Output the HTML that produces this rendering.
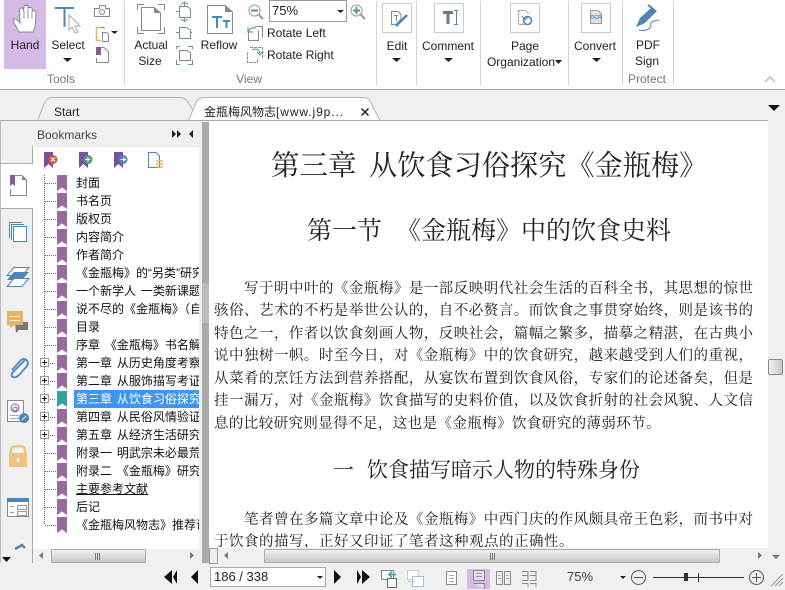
<!DOCTYPE html>
<html lang="zh-CN"><head><meta charset="utf-8"><title>PDF Reader</title>
<style>
html,body{margin:0;padding:0}
body{width:785px;height:590px;position:relative;overflow:hidden;background:#f0f0f0;font-family:"Liberation Sans","Noto Sans CJK SC",sans-serif;font-size:12px;color:#222}
.a{position:absolute}
.t{position:absolute;white-space:nowrap;line-height:16px;height:16px;z-index:2}
.c{transform:translateX(-50%)}
.g{color:#777}
.sep{position:absolute;top:1px;height:84px;width:1px;background:#d4d4d4}
.box{position:absolute;top:3px;width:28px;height:28px;border:1px solid #ccc;background:#fdfdfd}
.l{position:absolute;left:214px;width:539px;height:20px;line-height:20px;font-family:"Liberation Serif","Noto Serif CJK SC",serif;font-size:14.5px;color:#1a1a1a;text-align:justify;text-align-last:justify;text-justify:inter-character;white-space:nowrap}
.h{position:absolute;white-space:pre;font-family:"Liberation Serif","Noto Serif CJK SC",serif;color:#222}
.r{position:absolute;left:76px;height:18px;line-height:18px;font-size:12px;color:#111;white-space:nowrap;word-spacing:1.5px;font-family:"Liberation Sans","Noto Sans CJK SC",sans-serif}
.b{position:absolute;left:57px;width:10px;height:16px;background:#9a6a9e;clip-path:polygon(0 0,100% 0,100% 100%,50% 78%,0 100%)}
</style></head><body>

<!-- ribbon -->
<div class="a" style="left:0;top:0;width:785px;height:89px;background:#fdfdfd;border-bottom:1px solid #aaa"></div>
<div class="a" style="left:4px;top:0;width:42px;height:69px;background:#d5b9e6"></div>
<div class="sep" style="left:124px"></div><div class="sep" style="left:376px"></div><div class="sep" style="left:416px"></div><div class="sep" style="left:480px"></div><div class="sep" style="left:568px"></div><div class="sep" style="left:622px"></div><div class="sep" style="left:673px"></div>
<div class="box" style="left:382px"></div><div class="box" style="left:434px"></div><div class="box" style="left:510px"></div><div class="box" style="left:581px"></div>

<div class="t c" style="left:25px;top:37px">Hand</div>
<div class="t c" style="left:68px;top:37px">Select</div>
<div class="t c" style="left:151px;top:37px">Actual</div>
<div class="t c" style="left:150px;top:53px">Size</div>
<div class="t c" style="left:219px;top:37px">Reflow</div>
<div class="t" style="left:267px;top:25px">Rotate Left</div>
<div class="t" style="left:267px;top:47px">Rotate Right</div>
<div class="t c" style="left:397px;top:38px">Edit</div>
<div class="t c" style="left:448px;top:38px">Comment</div>
<div class="t c" style="left:525px;top:38px">Page</div>
<div class="t c" style="left:521px;top:54px">Organization</div>
<div class="t c" style="left:595px;top:38px">Convert</div>
<div class="t c" style="left:648px;top:37px">PDF</div>
<div class="t c" style="left:647px;top:53px">Sign</div>
<div class="t c g" style="left:61px;top:71px">Tools</div>
<div class="t c g" style="left:249px;top:71px">View</div>
<div class="t c g" style="left:647px;top:71px">Protect</div>
<div class="a" style="left:269px;top:0;width:76px;height:20px;border:1px solid #999;background:#fff"></div>
<div class="t" style="left:272px;top:3px;font-size:13px">75%</div>

<!-- tabs -->
<div class="t" style="left:54px;top:104px">Start</div>
<div class="t" style="left:204px;top:104px">金瓶梅风物志<span style="letter-spacing:.9px">[www.j9p...</span></div>

<!-- sidebar -->
<div class="t" style="left:37px;top:127px;color:#444">Bookmarks</div>
<div class="a" style="left:33px;top:146px;width:166px;height:417px;background:#fff"></div>
<div class="a" style="left:0;top:163px;width:34px;height:45px;background:#fff"></div>
<div class="a" style="left:0;top:121px;width:1px;height:442px;background:#bbb"></div>
<div class="a" style="left:32px;top:146px;width:1px;height:17px;background:#aaa"></div>
<div class="a" style="left:0;top:163px;width:33px;height:1px;background:#aaa"></div>
<div class="a" style="left:0;top:208px;width:33px;height:1px;background:#aaa"></div>
<div class="a" style="left:32px;top:208px;width:1px;height:355px;background:#aaa"></div>
<div class="a" style="left:33px;top:146px;width:166px;height:1px;background:#e8e8e8"></div>
<div class="a" style="left:202px;top:122px;width:7px;height:441px;background:#aaa"></div>
<div class="a" style="left:202px;top:283px;width:7px;height:40px;background-image:radial-gradient(#eee 0.6px,transparent 0.7px);background-size:2px 2px"></div>

<div class="a" style="left:74px;top:390px;width:125px;height:18px;background:#3c96f0"></div>
<div class="a" style="left:0;top:0;width:199px;height:548px;overflow:hidden">
<div class="b" style="top:175px"></div><div class="r" style="top:174px">封面</div>
<div class="b" style="top:193px"></div><div class="r" style="top:192px">书名页</div>
<div class="b" style="top:211px"></div><div class="r" style="top:210px">版权页</div>
<div class="b" style="top:229px"></div><div class="r" style="top:228px">内容简介</div>
<div class="b" style="top:247px"></div><div class="r" style="top:246px">作者简介</div>
<div class="b" style="top:265px"></div><div class="r" style="top:264px">《金瓶梅》的“另类”研究</div>
<div class="b" style="top:283px"></div><div class="r" style="top:282px">一个新学人 一类新课题</div>
<div class="b" style="top:301px"></div><div class="r" style="top:300px">说不尽的《金瓶梅》（自序）</div>
<div class="b" style="top:319px"></div><div class="r" style="top:318px">目录</div>
<div class="b" style="top:337px"></div><div class="r" style="top:336px">序章 《金瓶梅》书名解</div>
<div class="b" style="top:355px"></div><div class="r" style="top:354px">第一章 从历史角度考察</div>
<div class="b" style="top:373px"></div><div class="r" style="top:372px">第二章 从服饰描写考证</div>
<div class="b" style="top:391px;background:#36a09a"></div><div class="r" style="top:390px;color:#fff">第三章 从饮食习俗探究</div>
<div class="b" style="top:409px"></div><div class="r" style="top:408px">第四章 从民俗风情验证</div>
<div class="b" style="top:427px"></div><div class="r" style="top:426px">第五章 从经济生活研究</div>
<div class="b" style="top:445px"></div><div class="r" style="top:444px">附录一 明武宗未必最荒</div>
<div class="b" style="top:463px"></div><div class="r" style="top:462px">附录二 《金瓶梅》研究</div>
<div class="b" style="top:481px"></div><div class="r" style="top:480px;text-decoration:underline">主要参考文献</div>
<div class="b" style="top:499px"></div><div class="r" style="top:498px">后记</div>
<div class="b" style="top:517px"></div><div class="r" style="top:516px">《金瓶梅风物志》推荐语</div>
</div>

<!-- document -->
<div class="a" style="left:209px;top:121px;width:559px;height:427px;background:#fff"></div>
<div class="h" style="left:271px;top:149px;font-size:28.5px;line-height:36px">第三章</div>
<div class="h" style="left:369px;top:149px;font-size:28.2px;line-height:36px">从饮食习俗探究《金瓶梅》</div>
<div class="h" style="left:307px;top:216px;font-size:25px;line-height:32px">第一节</div>
<div class="h" style="left:396px;top:216px;font-size:25px;line-height:32px">《金瓶梅》中的饮食史料</div>
<div class="h" style="left:333px;top:456px;font-size:21px;line-height:28px">一</div>
<div class="h" style="left:367px;top:456px;font-size:21px;line-height:28px">饮食描写暗示人物的特殊身份</div>
<div class="l" style="top:279px;left:244px;width:509px">写于明中叶的《金瓶梅》是一部反映明代社会生活的百科全书，其思想的惊世</div>
<div class="l" style="top:301px">骇俗、艺术的不朽是举世公认的，自不必赘言。而饮食之事贯穿始终，则是该书的</div>
<div class="l" style="top:324px">特色之一，作者以饮食刻画人物，反映社会，篇幅之繁多，描摹之精湛，在古典小</div>
<div class="l" style="top:346px">说中独树一帜。时至今日，对《金瓶梅》中的饮食研究，越来越受到人们的重视，</div>
<div class="l" style="top:369px">从菜肴的烹饪方法到营养搭配，从宴饮布置到饮食风俗，专家们的论述备矣，但是</div>
<div class="l" style="top:391px">挂一漏万，对《金瓶梅》饮食描写的史料价值，以及饮食折射的社会风貌、人文信</div>
<div class="l" style="top:414px;text-align:left;text-align-last:left;letter-spacing:.4px;width:auto">息的比较研究则显得不足，这也是《金瓶梅》饮食研究的薄弱环节。</div>
<div class="l" style="top:510px;left:244px;width:509px">笔者曾在多篇文章中论及《金瓶梅》中西门庆的作风颇具帝王色彩，而书中对</div>
<div class="l" style="top:532px;text-align:left;text-align-last:left;letter-spacing:.5px;width:auto">于饮食的描写，正好又印证了笔者这种观点的正确性。</div>

<!-- status -->
<div class="a" style="left:210px;top:567px;width:114px;height:18px;border:1px solid #aaa;background:#fff"></div>
<div class="t" style="left:214px;top:569px;font-size:13px">186 / 338</div>
<div class="a" style="left:467px;top:569px;width:23px;height:20px;background:#d5b9e6"></div>
<div class="t" style="left:567px;top:569px;font-size:13px;color:#444">75%</div>

<!-- vector layer -->
<svg class="a" style="left:0;top:0" width="785" height="590" viewBox="0 0 785 590" fill="none" xmlns="http://www.w3.org/2000/svg">
<defs><linearGradient id="th" x1="0" y1="0" x2="0" y2="1"><stop offset="0" stop-color="#f2f2f2"/><stop offset="1" stop-color="#c6c6c6"/></linearGradient>
<linearGradient id="tv" x1="0" y1="0" x2="1" y2="0"><stop offset="0" stop-color="#f2f2f2"/><stop offset="1" stop-color="#c6c6c6"/></linearGradient></defs>
<!-- tabs -->
<path d="M37.500 120.500 L45 102 Q47 97.500 52 97.500 H180 Q185 97.500 188 102 L193 110" stroke="#b4b4b4" fill="#f0f0f0"/>
<path d="M188.500 120.500 L196 103 Q198 97.500 204 97.500 H364 Q368 97.500 370 101 L380 120.500 Z" stroke="#b4b4b4" fill="#fff"/>
<path d="M0 120.500H768" stroke="#aaa"/>
<path d="M361.500 108.500 L368.500 115.500 M368.500 108.500 L361.500 115.500" stroke="#222" stroke-width="1.500"/>
<path d="M768 105 H780 L774 111 Z" fill="#111"/>
<path d="M765 82 L770 77 L775 82" stroke="#ccc" stroke-width="2"/>
<!-- hand -->
<path d="M19 32 Q17 28 14 23 Q12 19 15 19 Q17 19 20 23 L19.500 10 Q20 7.500 22 8 Q23.500 8.500 23.500 11 L24 6.500 Q25 4.500 27 5.500 Q28 6 28 8 L29 7.500 Q31 6.500 32 8.500 L32.500 11 Q35 10 36 12 L35.500 23 Q35 28 33 32 Z" fill="#fff" stroke="#888"/>
<path d="M24 11V19M28 8V19M32 11V19" stroke="#999"/>
<!-- select -->
<path d="M55 8H74M64.500 8V27" stroke="#4a86b8" stroke-width="2"/>
<path d="M69 15 L80 26 L75 26 L78 32 L75 33 L72 27 L69 30 Z" fill="#fff" stroke="#aaa"/>
<path d="M63 58 H72 L67.500 62 Z" fill="#222"/>
<!-- tools small -->
<path d="M94.500 8.500H99.500V5.500H105.500V8.500H109.500V16.500H94.500Z" stroke="#888" fill="#fff"/><circle cx="102" cy="12" r="2.500" stroke="#888"/>
<path d="M100 27.500H96.500V40.500H101" stroke="#e5b26b" stroke-width="1.500"/><path d="M100 27.500H104V29" stroke="#888"/>
<path d="M102.500 32.500H106.500L108.500 34.500V41.500H102.500Z" stroke="#888" fill="#fff"/>
<path d="M111 31H118L114.500 34Z" fill="#222"/>
<path d="M96.500 52V47.500H104L108.500 52V62.500H96.500V58" stroke="#888" fill="#fff"/><rect x="96" y="47" width="5" height="8" fill="#8a5aa0"/>
<!-- actual size -->
<path d="M137.500 10V4.500H144M158 4.500H164.500V10M137.500 27V33.500H144M158 33.500H164.500V27" stroke="#5b9e8c"/>
<path d="M141.500 7.500H154L160.500 13V30.500H141.500Z" stroke="#888" fill="#fff"/><path d="M154 7V13H161Z" fill="#888"/>
<g stroke="#888" fill="#fff"><path d="M179.500 6.500H187L190.500 9V17.500H179.500Z"/><path d="M179.500 27.500H187L190.500 30V38.500H179.500Z"/><path d="M179.500 50.500H187L190.500 53V60.500H179.500Z"/></g>
<g stroke="#5b9e8c"><path d="M184.500 2V6M181 4.500L184.500 2L188 4.500M184.500 21V17.500M181 19L184.500 21.500L188 19M176 11.500H179M176 32.500H179M192 32.500H190M176.500 49V46.500H180M188 46.500H192.500V49M176.500 60V64.500H180M188 64.500H192.500V60"/></g>
<!-- reflow -->
<path d="M207.500 5.500H225L232.500 12V33.500H207.500Z" stroke="#888" fill="#fff"/><path d="M225 5V12H233Z" fill="#888"/>
<path d="M212 17H222M217 17V28M223 21H230M226.500 21V28" stroke="#4a86b8" stroke-width="2"/>
<!-- zoom -->
<circle cx="254.500" cy="10.500" r="5.500" stroke="#999" fill="#fff"/><path d="M258 14L263 19" stroke="#999" stroke-width="2"/><path d="M251 10.500H258" stroke="#4a9a80" stroke-width="2"/>
<circle cx="356.500" cy="10.500" r="5.500" stroke="#999" fill="#fff"/><path d="M360 14L365 19" stroke="#999" stroke-width="2"/><path d="M353 10.500H360M356.500 7V14" stroke="#4a9a80" stroke-width="2"/>
<path d="M337 10H344L340.500 13Z" fill="#222"/>
<!-- rotate -->
<path d="M248.500 32.500V40.500H258.500V30.500M255 26.500H262.500V38" stroke="#888"/><path d="M248 32Q250 27 256 28M248 27V32H253" stroke="#4a9a80"/>
<path d="M247.500 52.500V62.500H257.500V58M250 47.500H262.500V58" stroke="#888" stroke-dasharray="3 1"/><path d="M252 50Q258 47 260 53M257 52L260 55L263 51" stroke="#4a9a80"/>
<!-- edit -->
<path d="M391.500 11.500H398L401 14.500V19L396 24.500H391.500Z" stroke="#888" fill="#fff"/><path d="M394 15.500H398M396.500 15.500V21" stroke="#888"/>
<path d="M396 26L407 15" stroke="#4a86b8" stroke-width="2.500"/>
<path d="M392 58H401L396.500 62Z" fill="#222"/><path d="M444 58H453L448.500 62Z" fill="#222"/>
<!-- comment -->
<path d="M443 12.500H453M448 12.500V24" stroke="#777" stroke-width="3"/>
<path d="M454 10.500H458M456.500 10.500V24.500M454 24.500H458" stroke="#4a86b8"/>
<!-- page org -->
<path d="M518.500 10.500H526L529.500 14M518.500 10.500V24.500H525" stroke="#888" stroke-dasharray="2 1"/>
<circle cx="527.500" cy="20.500" r="4" stroke="#4a86b8" stroke-width="1.500"/><path d="M522 16L525 20L528 17" stroke="#4a86b8"/>
<path d="M555 60H562L558.500 64Z" fill="#222"/>
<!-- convert -->
<path d="M590.500 10.500H598L601.500 14V23.500H590.500Z" fill="#e0e0e0" stroke="#999"/>
<text x="590.500" y="19" font-family="Liberation Sans" font-size="5" font-weight="bold" fill="#4a86b8">OCR</text>
<path d="M592 58H601L596.500 62Z" fill="#222"/>
<!-- pdf sign -->
<path d="M636 27 L640 18 L652 7 L657 11 L645 23 Z" fill="#4a86b8"/><path d="M648 5L652 8" stroke="#4a86b8" stroke-width="2"/>
<path d="M639 30Q648 32 651 26Q649 21 659 20" stroke="#4a86b8"/>

<!-- bookmark toolbar -->
<g fill="#7b4f9d"><path d="M44 152H53V168L48.500 164L44 168Z"/><path d="M79 152H88V168L83.500 164L79 168Z"/><path d="M114 152H123V168L118.500 164L114 168Z"/></g>
<circle cx="53" cy="159.500" r="4.500" fill="#d9583c"/><path d="M51 157.500L55 161.500M55 157.500L51 161.500" stroke="#fff"/>
<circle cx="88" cy="159.500" r="4.500" fill="#4a9a80"/><path d="M85.500 159.500H90.500M88 157V162" stroke="#fff"/>
<circle cx="123" cy="159.500" r="4.500" fill="#4a80b8"/><path d="M120.500 159.500H125.500M123 157.500L125.500 159.500L123 161.500" stroke="#fff"/>
<path d="M148.500 152.500H156L159.500 156V167.500H148.500Z" stroke="#4a86b8" fill="#fff"/><path d="M156 161H163M156 164H163M156 167H163" stroke="#e5b26b" stroke-width="1.600"/>
<path d="M172 130L176 134L172 138ZM177 130L181 134L177 138Z" fill="#222"/><path d="M193 130V138L189 134Z" fill="#222"/>

<!-- tree -->
<g stroke="#666" stroke-dasharray="1 1">
<path d="M44.500 175V524"/>
<path d="M45 183.500H56M45 201.500H56M45 219.500H56M45 237.500H56M45 255.500H56M45 273.500H56M45 291.500H56M45 309.500H56M45 327.500H56M45 345.500H56M50 363.500H56M50 381.500H56M50 399.500H56M50 417.500H56M50 435.500H56M45 453.500H56M45 471.500H56M45 489.500H56M45 507.500H56M45 525.500H56"/>
</g>
<g stroke="#999" fill="#fff"><rect x="40.500" y="358.500" width="8" height="8"/><rect x="40.500" y="376.500" width="8" height="8"/><rect x="40.500" y="394.500" width="8" height="8"/><rect x="40.500" y="412.500" width="8" height="8"/><rect x="40.500" y="430.500" width="8" height="8"/></g>
<path d="M42 362.500H47M44.500 360V365M42 380.500H47M44.500 378V383M42 398.500H47M44.500 396V401M42 416.500H47M44.500 414V419M42 434.500H47M44.500 432V437" stroke="#111"/>

<!-- left rail -->
<path d="M10.500 186V175.500H22L26.500 180V195.500H10.500V189" stroke="#888" fill="#fff"/><path d="M22 175V180H27Z" fill="#888"/><path d="M10 175H15V186L12.500 184L10 186Z" fill="#8a5aa0"/>
<path d="M9.500 238V222.500H22" stroke="#4a86b8"/><path d="M11.500 240V224.500H24" stroke="#4a86b8"/><rect x="13.500" y="226.500" width="13" height="15" stroke="#4a86b8" fill="#fff"/>
<path d="M14 267.500H29L22 275.500H7Z" stroke="#4a86b8" fill="#fff"/><path d="M14 272H29L22 280H7Z" fill="#4a86b8"/><path d="M14 278.500H29L22 286.500H7Z" stroke="#4a86b8" fill="#fff"/>
<path d="M15 322H28V330H19L16 333Z" fill="#777"/>
<path d="M7 311H23V325H15L10 328V325H7Z" fill="#ecb060"/><path d="M10 316.500H20M10 320.500H20" stroke="#fff"/>
<path d="M26 359 L13 372 Q10 376 13 377 Q16 378 19 375 L27 366 Q29 362 26.500 360 Q24 358 21 360 L12 370" stroke="#5a90c0" stroke-width="2"/>
<path d="M7.500 400.500H23.500V421.500H7.500Z" stroke="#888" fill="#fff"/><path d="M10 415.500H19M10 418.500H19" stroke="#aaa"/>
<circle cx="15" cy="408" r="4" stroke="#8a5aa0"/><circle cx="15" cy="409" r="2" stroke="#8a5aa0"/>
<circle cx="24" cy="418" r="5" fill="#4a86b8"/><path d="M22 420L26 416" stroke="#fff"/>
<path d="M11 454V450Q11 446 18 446Q25 446 25 450V454" stroke="#edc47c" stroke-width="2.500"/><rect x="9" y="453" width="18" height="14" rx="1" fill="#edc47c"/><path d="M18 458V462" stroke="#fff" stroke-width="2.500"/>
<rect x="7.500" y="498.500" width="21" height="18" stroke="#888" fill="#fff"/><rect x="7" y="498" width="22" height="4" fill="#4a86b8"/>
<path d="M10 506.500H14M10 512.500H14M17.500 505.500H26.500V509.500H17.500ZM17.500 511.500H26.500V515.500H17.500Z" stroke="#999"/>
<path d="M15 549L22 545L25 548" stroke="#4a86b8" stroke-width="2.500"/>
<path d="M2 557H11L6.500 562Z" fill="#111"/>
<!-- sidebar hscroll -->
<rect x="33" y="549" width="166" height="14" fill="#f0f0f0"/>
<rect x="51.500" y="549.500" width="94" height="13" rx="1" fill="url(#th)" stroke="#aaa"/>
<path d="M95.500 553V560M97.500 553V560M99.500 553V560" stroke="#777"/>
<path d="M43 552V559L39 555.500Z" fill="#777"/><path d="M190 552V559L194 555.500Z" fill="#777"/>
<!-- doc scrollbars -->
<rect x="768" y="121" width="17" height="442" fill="#f0f0f0"/>
<rect x="768.500" y="359.500" width="14" height="15" rx="1.500" fill="url(#tv)" stroke="#888"/>
<rect x="209" y="548" width="559" height="15" fill="#f0f0f0"/>
<rect x="209.500" y="548.500" width="8" height="15" fill="#eee" stroke="#999"/>
<rect x="264.500" y="549.500" width="455" height="13" rx="1" fill="url(#th)" stroke="#aaa"/>
<path d="M490.500 553V560M492.500 553V560M494.500 553V560" stroke="#777"/>
<path d="M228 552V559L224 555.500Z" fill="#777"/><path d="M758 552V559L762 555.500Z" fill="#777"/>
<path d="M772 555H780L776 559Z" fill="#777"/>
<!-- status icons -->
<path d="M172 570V584L164 577ZM177 570V584L173 577Z" fill="#111"/>
<path d="M198 570V584L191 577Z" fill="#111"/>
<path d="M317 576H323L320 579Z" fill="#222"/>
<path d="M334 570V584L341 577Z" fill="#111"/>
<path d="M357 570V584L361 577ZM362 570V584L370 577Z" fill="#111"/>
<rect x="381.500" y="570.500" width="12" height="9" fill="#fff" stroke="#5a90c0"/><rect x="387.500" y="578.500" width="9" height="9" fill="#fff" stroke="#666"/><path d="M389 574.500H396M392 571.500L389 574.500L392 577.500" stroke="#4a9a80" stroke-width="1.500"/>
<rect x="407.500" y="570.500" width="11" height="9" fill="#fff" stroke="#ccc"/><rect x="412.500" y="576.500" width="11" height="10" fill="#fff" stroke="#abc"/><path d="M408 581.500H414M411 578.500L414 581.500L411 584.500" stroke="#acd"/>
<!-- view modes -->
<rect x="446.500" y="571.500" width="10" height="13" stroke="#888" fill="#fff"/><path d="M449 575.500H454M449 578.500H454M449 581.500H454" stroke="#aaa"/>
<path d="M473.500 570.500H484.500V580.500H473.500ZM473.500 583.500H484.500V589" stroke="#888" fill="#e8daf2"/><path d="M476 573.500H482M476 576.500H482" stroke="#999"/>
<rect x="496.500" y="571.500" width="6" height="13" stroke="#888"/><rect x="504.500" y="571.500" width="6" height="13" stroke="#888"/><path d="M498 575.500H501M498 578.500H501M506 575.500H509M506 578.500H509" stroke="#aaa"/>
<path d="M522 571.500H528V580.500H522M530 571.500H536V580.500H530M522 583.500H528V587M530 583.500H536V587M522 575.500H528M530 575.500H536" stroke="#888"/>
<path d="M620 576H626L623 579Z" fill="#222"/>
<circle cx="638.500" cy="577.500" r="7" stroke="#555"/><path d="M634 577.500H643" stroke="#555"/>
<path d="M653 577.500H744" stroke="#333"/><rect x="684" y="573" width="4" height="8" fill="#333"/><path d="M698.500 573V582" stroke="#333"/>
<circle cx="756.500" cy="577.500" r="7" stroke="#555"/><path d="M752 577.500H761M756.500 573V582" stroke="#555"/>
<path d="M771 586L783 574M775 586L783 578M779 586L783 582" stroke="#999"/>
</svg>
</body></html>
